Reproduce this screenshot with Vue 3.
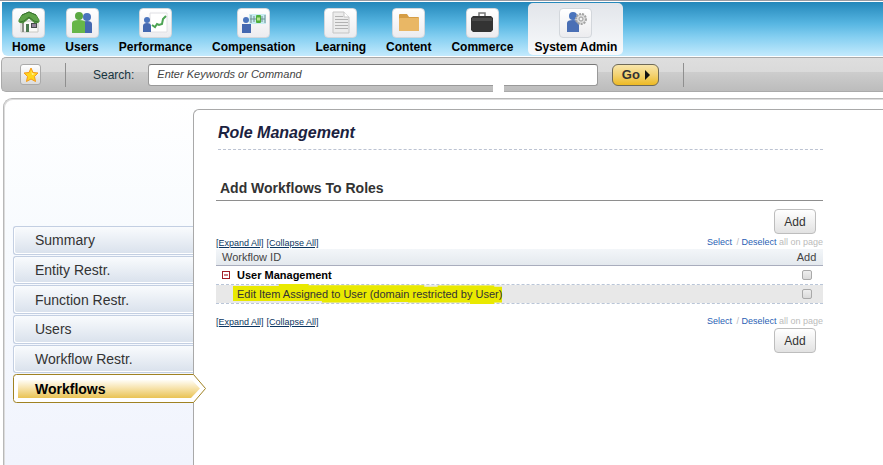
<template>
    <div class="page">
        <header class="topbar">
            <nav class="topbar-nav">
                <a v-for="entry in mainMenu" :key="entry.id" href="#" class="nav-item" :class="{ active: entry.id === currentMenu }" @click.prevent="currentMenu = entry.id">
                    <span class="nav-icon">
                        <svg v-if="entry.id === 'home'" width="24" height="24" viewBox="0 0 24 24">
                            <path d="M4 10h17v11H4z" fill="#fafaf8" stroke="#c8c8c2" stroke-width="1" />
                            <path d="M5 10h2v11H5z" fill="#8d8f88" />
                            <path d="M9 13h3v8H9z" fill="#4c7a50" />
                            <path d="M14 12h6v5h-6z" fill="#454a4a" />
                            <path d="M15 13h4v3h-4z" fill="#92839a" />
                            <path d="M2 11V9l3-5 7-3 7 3 3 5v2l-4 1-6-5-6 5z" fill="#5fa348" stroke="#4a8c39" stroke-width="1" />
                            <path d="M5 4l7-3 7 3M3 11l4-1 5-4 5 4 4 1" fill="none" stroke="#3a7330" stroke-width="1" />
                        </svg>
                        <svg v-else-if="entry.id === 'users'" width="24" height="24" viewBox="0 0 24 24">
                            <circle cx="17" cy="6" r="4" fill="#4a74bd" />
                            <path d="M12 22V13q0-3 5-3t5 3v9z" fill="#4468b0" />
                            <circle cx="9" cy="5" r="4" fill="#5aa842" />
                            <path d="M2 22V12q0-3 7-3t6 3v10z" fill="#67b648" />
                        </svg>
                        <svg v-else-if="entry.id === 'performance'" width="26" height="24" viewBox="0 0 26 24">
                            <path d="M8 2h17v19H8z" fill="#fff" stroke="#e0e0e4" />
                            <circle cx="5" cy="9" r="3" fill="#4a74bd" />
                            <path d="M1 21v-6q0-3 4-3t4 3v6z" fill="#4468b0" />
                            <path d="M10 14l3 2 2-3 2 1 3-1 1-5 3-3" fill="none" stroke="#4da453" stroke-width="2" />
                        </svg>
                        <svg v-else-if="entry.id === 'compensation'" width="26" height="24" viewBox="0 0 26 24">
                            <path d="M8 3h17v10H8z" fill="#c9ecf2" />
                            <path d="M9 8h15M10 4v8M13 5v6M21 5v6M24 4v8" stroke="#6f8f91" stroke-width="1" />
                            <rect x="15" y="4" width="5" height="8" rx="1" fill="#4fae3a" />
                            <path d="M16 8h3" stroke="#b6e48e" stroke-width="3" />
                            <circle cx="5" cy="9" r="3" fill="#4a74bd" />
                            <path d="M1 22v-9h9v9z" fill="#4468b0" />
                        </svg>
                        <svg v-else-if="entry.id === 'learning'" width="24" height="24" viewBox="0 0 24 24">
                            <path d="M4 1h11l5 5v16H4z" fill="#ececec" stroke="#c5c5c5" />
                            <path d="M15 1v5h5" fill="#fff" stroke="#c5c5c5" />
                            <path d="M6 5.500h8M6 8.500h13M6 11.500h13M6 14.500h13M6 17.500h13" stroke="#b2b2b2" />
                        </svg>
                        <svg v-else-if="entry.id === 'content'" width="24" height="24" viewBox="0 0 24 24">
                            <path d="M2 19V4q0-1 1-1h7l2 3h9q1 0 1 1v12q0 1-1 1H3q-1 0-1-1z" fill="#d59d45" />
                            <path d="M2 19V8q0-1 1-1h18q1 0 1 1v11q0 1-1 1H3q-1 0-1-1z" fill="#e9b765" />
                        </svg>
                        <svg v-else-if="entry.id === 'commerce'" width="24" height="24" viewBox="0 0 24 24">
                            <path d="M9 6V2h6v4" fill="none" stroke="#777" stroke-width="1.500" />
                            <path d="M3 5h18l2 2v12l-2 2H3l-2-2V7z" fill="#333" />
                            <path d="M2 7h20v3H2z" fill="#494949" />
                        </svg>
                        <svg v-else width="24" height="24" viewBox="0 0 24 24">
                            <circle cx="9" cy="5" r="4" fill="#4a74bd" />
                            <path d="M3 21v-9q0-3 6-3t6 3v9z" fill="#4a6fb5" />
                            <circle cx="17" cy="8" r="5" fill="#dcdcdc" stroke="#a4a4a4" stroke-width="2" stroke-dasharray="2 1" />
                            <circle cx="17" cy="8" r="2" fill="#f4f4f4" stroke="#9c9c9c" />
                        </svg>
                    </span>
                    <span class="nav-label">{{ entry.label }}</span>
                </a>
            </nav>
        </header>

        <form class="toolbar" @submit.prevent="runSearch">
            <button type="button" class="favorite" aria-label="Favorites">
                <svg width="16" height="16" viewBox="0 0 16 16">
                    <path d="M8 1l2 4.500 5 .5-3.500 3.500 1 5L8 12l-4.500 2.500 1-5L1 6l5-.5z" fill="#ffd51e" stroke="#f59a17" stroke-linejoin="round" />
                    <path d="M8 3l1 3 3 1-3 1z" fill="#fff3a0" />
                </svg>
            </button>
            <span class="separator"></span>
            <label for="search">Search:</label>
            <input id="search" v-model="keywords" type="text" placeholder="Enter Keywords or Command">
            <button type="submit" class="go">
                Go
                <svg width="5" height="10" viewBox="0 0 5 10"><path d="M0 0l5 5-5 5z" fill="#111" /></svg>
            </button>
            <span class="separator"></span>
            <span class="notch"></span>
        </form>

        <main class="frame">
            <nav class="sidebar">
                <a v-for="name in sections" :key="name" href="#" class="side-item" :class="{ active: name === currentSection }" @click.prevent="currentSection = name">
                    <svg v-if="name === currentSection" class="side-arrow" width="194" height="30" viewBox="0 0 194 30">
                        <defs>
                            <linearGradient id="gold" x1="0" y1="0" x2="0" y2="1">
                                <stop offset="0" stop-color="#fffdf6" />
                                <stop offset="0.450" stop-color="#f7e3ac" />
                                <stop offset="1" stop-color="#e9c354" />
                            </linearGradient>
                        </defs>
                        <path d="M3.500.5H180.500L192.500 14.500 180.500 28.500H3.500Q.5 28.500.5 25.500V3.500Q.5.5 3.500.5z" fill="#fff" stroke="#a08222" />
                        <path d="M5 6H179L187 14.500 178 24H5z" fill="url(#gold)" />
                    </svg>
                    <span class="side-label">{{ name }}</span>
                </a>
            </nav>

            <section class="content">
                <h1>Role Management</h1>
                <h2>Add Workflows To Roles</h2>

                <div class="actions">
                    <button type="button" class="add-button">Add</button>
                </div>
                <div class="list-links">
                    <div class="expand-links">
                        <a href="#" @click.prevent="expanded = true">[Expand All]</a>
                        <a href="#" @click.prevent="expanded = false">[Collapse All]</a>
                    </div>
                    <div class="select-links">
                        <a href="#" class="select" @click.prevent="setAll(true)">Select</a>
                        / <a href="#" @click.prevent="setAll(false)">Deselect</a> all on page
                    </div>
                </div>

                <table>
                    <thead>
                        <tr>
                            <th>Workflow ID</th>
                            <th class="check">Add</th>
                        </tr>
                    </thead>
                    <tbody>
                        <tr>
                            <td>
                                <div class="group">
                                    <button type="button" class="toggle" aria-label="Toggle group" @click="expanded = !expanded"></button>
                                    <label for="check-group">User Management</label>
                                </div>
                            </td>
                            <td class="check"><input id="check-group" v-model="checks.group" type="checkbox"></td>
                        </tr>
                        <tr v-if="expanded" class="child">
                            <td><label for="check-item" class="marked">Edit Item Assigned to User (domain restricted by User)</label></td>
                            <td class="check"><input id="check-item" v-model="checks.item" type="checkbox"></td>
                        </tr>
                    </tbody>
                </table>

                <div class="list-links bottom">
                    <div class="expand-links">
                        <a href="#" @click.prevent="expanded = true">[Expand All]</a>
                        <a href="#" @click.prevent="expanded = false">[Collapse All]</a>
                    </div>
                    <div class="select-links">
                        <a href="#" class="select" @click.prevent="setAll(true)">Select</a>
                        / <a href="#" @click.prevent="setAll(false)">Deselect</a> all on page
                    </div>
                </div>
                <div class="actions">
                    <button type="button" class="add-button">Add</button>
                </div>
            </section>
        </main>
    </div>
</template>

<script setup>
import { ref } from 'vue';

const mainMenu = [
    { id: 'home', label: 'Home' },
    { id: 'users', label: 'Users' },
    { id: 'performance', label: 'Performance' },
    { id: 'compensation', label: 'Compensation' },
    { id: 'learning', label: 'Learning' },
    { id: 'content', label: 'Content' },
    { id: 'commerce', label: 'Commerce' },
    { id: 'admin', label: 'System Admin' },
];

const sections = ['Summary', 'Entity Restr.', 'Function Restr.', 'Users', 'Workflow Restr.', 'Workflows'];

const currentMenu = ref('admin');
const currentSection = ref('Workflows');
const keywords = ref('');
const expanded = ref(true);
const checks = ref({
    group: false,
    item: false,
});

const setAll = (value) => {
    checks.value.group = value;
    checks.value.item = value;
};

const runSearch = () => {
    console.log('Search:', keywords.value);
};
</script>

<style>
body {
    margin: 0;
    background: #fff;
}
</style>

<style scoped>
* {
    box-sizing: border-box;
}

.page {
    display: flex;
    flex-direction: column;
    min-height: 100vh;
    border-top: 1px solid #999ba3;
    font-family: "Liberation Sans", Arial, sans-serif;
    overflow: hidden;
}

a {
    color: inherit;
    text-decoration: none;
}

button,
input {
    font-family: inherit;
    margin: 0;
}

.topbar {
    margin: 1px 0 0 2px;
    height: 54px;
    border-bottom-left-radius: 6px;
    background: linear-gradient(#2487ba, #57b6e2 40%, #85cff1 65%, #c3eafd);
}

.topbar-nav {
    display: flex;
    height: 54px;
    padding: 1px 0 1px;
}

.nav-item {
    display: flex;
    flex-direction: column;
    align-items: center;
    padding: 5px 10px 0;
    border-radius: 5px;
}

.nav-item.active {
    margin-left: 5px;
    padding: 5px 6px 0;
    background: linear-gradient(#e2e5ea, #f8fafc);
}

.nav-icon {
    display: flex;
    align-items: center;
    justify-content: center;
    width: 33px;
    height: 30px;
    border: 1px solid #d3d7dc;
    border-radius: 4px;
    background: linear-gradient(#fff, #ececef);
}

.nav-label {
    margin-top: 2px;
    font-size: 12px;
    line-height: 14px;
    font-weight: bold;
    color: #000;
    white-space: nowrap;
}

.toolbar {
    position: relative;
    display: flex;
    align-items: center;
    height: 35px;
    margin: 1px 0 0 1px;
    padding: 0 0 0 18px;
    border: 1px solid #aaa;
    border-right: none;
    border-radius: 5px 0 0 5px;
    background: linear-gradient(#dedede 0, #dadada 42%, #cdcdcd 43%, #bcbcbc 100%);
}

.favorite {
    display: flex;
    align-items: center;
    justify-content: center;
    width: 21px;
    height: 21px;
    padding: 0;
    border: 1px solid #aaa;
    border-radius: 3px;
    background: linear-gradient(#fff, #dcdcdc);
}

.separator {
    width: 1px;
    height: 24px;
    margin-left: 24px;
    background: #8f8f8f;
}

.toolbar label {
    margin-left: 27px;
    font-size: 12px;
    color: #173540;
}

.toolbar input {
    flex: 0 1 450px;
    height: 22px;
    margin: 0 0 0 14px;
    padding: 0 8px 2px;
    border: 1px solid #999;
    border-top-color: #777;
    border-radius: 3px;
    background: #fff;
    font-size: 11px;
    font-style: italic;
}

.toolbar input::placeholder {
    color: #444;
    opacity: 1;
}

.go {
    display: flex;
    align-items: center;
    justify-content: center;
    gap: 5px;
    width: 47px;
    height: 22px;
    margin-left: 14px;
    padding: 0;
    border: 1px solid #6f6a58;
    border-radius: 6px;
    background: linear-gradient(#f8e6ac, #f3d272 50%, #edb923);
    font-size: 13px;
    font-weight: bold;
    color: #333;
}

.notch {
    position: absolute;
    left: 491px;
    bottom: -1px;
    width: 11px;
    height: 8px;
    background: #fff;
}

.frame {
    flex: 1;
    display: flex;
    margin: 6px 0 0 3px;
    border: solid #b8b8b8;
    border-width: 1px 0 0 1px;
    border-top-left-radius: 9px;
    box-shadow: inset 1px 1px 0 #dcdcdc;
    background: linear-gradient(#fff, #f8fbfe 35%, #f1f4fd);
}

.sidebar {
    position: relative;
    z-index: 1;
    flex: none;
    display: grid;
    grid-auto-rows: 1fr;
    align-self: flex-start;
    gap: 1px;
    width: 189px;
    height: 304px;
    padding: 127px 0 0 9px;
}

.side-item {
    position: relative;
    display: flex;
    align-items: center;
    padding-left: 21px;
    border: 1px solid #c3cfe2;
    border-right: none;
    border-radius: 3px 0 0 3px;
    background: linear-gradient(#f9fbfd, #d9e1ec);
    box-shadow: inset 1px -1px 0 #fff;
    font-size: 14px;
    color: #333;
}

.side-item.active {
    border-color: transparent;
    background: none;
    box-shadow: none;
    font-weight: bold;
    color: #000;
}

.side-arrow {
    position: absolute;
    left: -1px;
    top: -1px;
}

.side-label {
    position: relative;
}

.content {
    flex: 1;
    min-width: 0;
    margin-top: 10px;
    padding: 14px 60px 20px 22px;
    border: solid #a9a9a9;
    border-width: 1px 0 0 1px;
    border-top-left-radius: 6px;
    background: #fff;
}

h1 {
    margin: 0 0 0 2px;
    height: 26px;
    border-bottom: 1px dashed #bcc3d2;
    font-size: 16px;
    line-height: 18px;
    font-style: italic;
    color: #1b2240;
}

h2 {
    margin: 26px 0 8px;
    padding: 4px;
    border-bottom: 1px solid #8e8e8e;
    font-size: 14px;
    line-height: 16px;
    color: #333;
}

.actions {
    display: flex;
    justify-content: flex-end;
    padding-right: 7px;
}

.add-button {
    width: 42px;
    height: 25px;
    padding: 0;
    border: 1px solid #bdbdbd;
    border-radius: 4px;
    background: linear-gradient(#fff, #e2e2e2);
    font-size: 12px;
    color: #333;
}

.list-links {
    display: flex;
    justify-content: space-between;
    align-items: flex-end;
    height: 15px;
    font-size: 9px;
    line-height: 12px;
}

.list-links.bottom {
    margin-top: 12px;
    height: 12px;
}

.expand-links {
    display: flex;
    gap: 3px;
    color: #0b3560;
}

.expand-links a {
    text-decoration: underline;
}

.select-links {
    padding-bottom: 1px;
    color: #bbb;
}

.select-links a {
    color: #2a5fb4;
}

.select-links .select {
    margin-right: 2px;
}

table {
    width: 100%;
    border-collapse: separate;
    border-spacing: 0;
    font-size: 11px;
    line-height: 14px;
    color: #333;
}

th,
td {
    height: 19px;
    padding: 0 6px;
    text-align: left;
    vertical-align: middle;
}

th {
    height: 17px;
    border-bottom: 1px solid #a9adbd;
    background: linear-gradient(#f3f6f9, #e4e9ee);
    font-weight: normal;
    color: #444;
}

td {
    border-bottom: 1px dashed #bac6d8;
}

.child td {
    background: #e8e8e8;
    background-clip: padding-box;
}

.check {
    width: 33px;
    text-align: center;
}

td.check {
    line-height: 0;
}

.group {
    display: flex;
    align-items: center;
    gap: 7px;
    font-weight: bold;
    color: #000;
}

.toggle {
    display: flex;
    align-items: center;
    justify-content: center;
    width: 8px;
    height: 8px;
    padding: 0;
    border: 1px solid #a01d25;
    background: #fff;
}

.toggle::before {
    content: "";
    flex: none;
    width: 4px;
    height: 2px;
    background: #cf7c80;
}

.marked {
    position: relative;
    z-index: 0;
    margin-left: 15px;
}

/* hand-drawn marker stroke behind the workflow name */
.marked::before {
    content: "";
    position: absolute;
    z-index: -1;
    inset: -4px 0 -4px -4px;
    background: #e9e900;
    clip-path: polygon(0 10%, 17% 10%, 17% 0, 28% 0, 28% 6%, 71% 6%, 71% 14%, 76% 14%, 76% 8%, 97% 8%, 97% 14%, 100% 14%, 100% 92%, 97% 92%, 97% 100%, 88% 100%, 88% 93%, 65% 93%, 65% 90%, 58% 90%, 58% 93%, 33% 93%, 33% 85%, 0 85%);
}

td input {
    appearance: none;
    width: 10px;
    height: 10px;
    border: 1px solid #a9a9a9;
    border-radius: 2px;
    background: linear-gradient(#eee, #dadada);
    vertical-align: middle;
}

td input:checked {
    background: #2a5fb4;
}
</style>
